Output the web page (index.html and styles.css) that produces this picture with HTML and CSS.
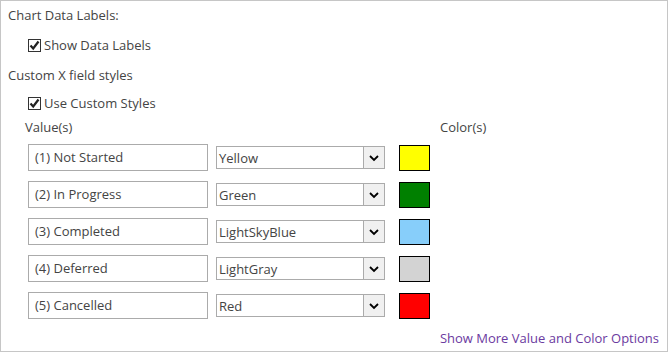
FILE: index.html
```html
<!DOCTYPE html>
<html>
<head>
<meta charset="utf-8">
<link rel="stylesheet" href="styles.css">
</head>
<body>
<div class="panel">
  <div class="heading">Chart Data Labels:</div>
  <label class="check"><span class="box"><svg viewBox="0 0 13 13" width="13" height="13"><path d="M2.5 6.5 L5.2 9.5 L10.5 2.5" fill="none" stroke="#222" stroke-width="2.2"/></svg></span>Show Data Labels</label>
  <div class="heading h2">Custom X field styles</div>
  <label class="check check2"><span class="box"><svg viewBox="0 0 13 13" width="13" height="13"><path d="M2.5 6.5 L5.2 9.5 L10.5 2.5" fill="none" stroke="#222" stroke-width="2.2"/></svg></span>Use Custom Styles</label>
  <div class="cols">
    <span class="col-value">Value(s)</span>
    <span class="col-color">Color(s)</span>
  </div>
  <div class="rows">
    <div class="row"><div class="input">(1) Not Started</div><div class="select"><span>Yellow</span><span class="btn"><svg viewBox="0 0 20 20" width="20" height="20"><path d="M6 8 L10 12 L14 8" fill="none" stroke="#000" stroke-width="1.8"/></svg></span></div><div class="swatch" style="background:#ffff00"></div></div>
    <div class="row"><div class="input">(2) In Progress</div><div class="select"><span>Green</span><span class="btn"><svg viewBox="0 0 20 20" width="20" height="20"><path d="M6 8 L10 12 L14 8" fill="none" stroke="#000" stroke-width="1.8"/></svg></span></div><div class="swatch" style="background:#008000"></div></div>
    <div class="row"><div class="input">(3) Completed</div><div class="select"><span>LightSkyBlue</span><span class="btn"><svg viewBox="0 0 20 20" width="20" height="20"><path d="M6 8 L10 12 L14 8" fill="none" stroke="#000" stroke-width="1.8"/></svg></span></div><div class="swatch" style="background:#87cefa"></div></div>
    <div class="row"><div class="input">(4) Deferred</div><div class="select"><span>LightGray</span><span class="btn"><svg viewBox="0 0 20 20" width="20" height="20"><path d="M6 8 L10 12 L14 8" fill="none" stroke="#000" stroke-width="1.8"/></svg></span></div><div class="swatch" style="background:#d3d3d3"></div></div>
    <div class="row"><div class="input">(5) Cancelled</div><div class="select"><span>Red</span><span class="btn"><svg viewBox="0 0 20 20" width="20" height="20"><path d="M6 8 L10 12 L14 8" fill="none" stroke="#000" stroke-width="1.8"/></svg></span></div><div class="swatch" style="background:#ff0000"></div></div>
  </div>
  <div class="more"><a href="#">Show More Value and Color Options</a></div>
</div>
</body>
</html>
```
FILE: styles.css
```css
html, body {
  margin: 0;
  padding: 0;
  background: #fff;
}
body {
  font-family: "Open Sans", "Noto Sans", sans-serif;
  font-size: 13px;
  color: #444;
}
.panel {
  box-sizing: border-box;
  width: 668px;
  height: 352px;
  border: 1px solid #c6c6c6;
  padding: 5px 0 0 7px;
}
.heading {
  height: 18px;
  line-height: 18px;
}
.h2 {
  margin-top: 12px;
}
.check {
  display: flex;
  align-items: center;
  height: 18px;
  margin: 12px 0 0 20px;
}
.check2 {
  margin-top: 10px;
}
.box {
  width: 13px;
  height: 13px;
  border: 1px solid #333;
  box-sizing: border-box;
  margin-right: 3px;
  display: flex;
  align-items: center;
  justify-content: center;
  overflow: visible;
}
.box svg {
  flex: none;
}
.cols {
  display: flex;
  margin-top: 6px;
  height: 18px;
  line-height: 18px;
}
.col-value {
  margin-left: 17px;
  width: 415px;
}
.rows {
  display: flex;
  flex-direction: column;
  gap: 10px;
  margin-top: 8px;
  margin-left: 20px;
}
.row {
  display: flex;
  align-items: center;
  height: 27px;
}
.input {
  box-sizing: border-box;
  width: 180px;
  height: 27px;
  border: 1px solid #ababab;
  padding-left: 6px;
  line-height: 25px;
}
.select {
  box-sizing: border-box;
  width: 169px;
  height: 23px;
  margin-left: 8px;
  border: 1px solid #ababab;
  display: flex;
  align-items: center;
  justify-content: space-between;
  padding-left: 2px;
}
.btn {
  box-sizing: border-box;
  width: 21px;
  height: 21px;
  border-left: 1px solid #ababab;
  background: #f0f0f0;
  display: flex;
  align-items: center;
  justify-content: center;
}
.swatch {
  box-sizing: border-box;
  width: 31px;
  height: 26px;
  border: 1px solid #000;
  margin-left: 14px;
}
.more {
  display: flex;
  justify-content: flex-end;
  margin-top: 10px;
  padding-right: 8px;
}
.more a {
  color: #6b3aa0;
  text-decoration: none;
}
```
